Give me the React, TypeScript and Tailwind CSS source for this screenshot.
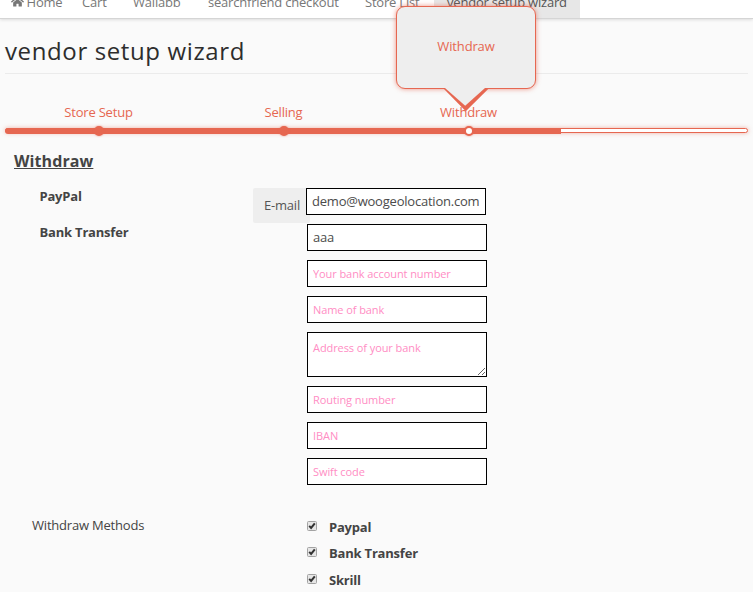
import type { ReactNode } from "react";
import { FaHome } from "react-icons/fa";

const steps = [
  { label: "Store Setup", active: false },
  { label: "Selling", active: false },
  { label: "Withdraw", active: true },
];

const methods = [
  { label: "Paypal", row: "h-[26px]" },
  { label: "Bank Transfer", row: "h-[27px]" },
  { label: "Skrill", row: "h-[27px]" },
];

const field =
  "block w-[180px] rounded-none border border-black bg-white px-[5px] text-[13px] tracking-[-0.22px] text-[#4b4b4b] outline-none placeholder:text-[11px] placeholder:tracking-[-0.08px] placeholder:text-[#ff8dc4] placeholder:opacity-100";

function NavItem({ children, className }: { children: ReactNode; className: string }) {
  return <li className={`flex h-full shrink-0 items-end pb-[7px] pl-[13px] ${className}`}>{children}</li>;
}

function CheckMark() {
  return (
    <svg width="10" height="10" viewBox="0 0 10 10" className="block">
      <rect x="0.5" y="0.5" width="9" height="9" rx="1" fill="#e6e6e6" stroke="#a3a3a3" />
      <path d="M2.2 4.9 4.1 6.9 7.8 2.4" fill="none" stroke="#333" strokeWidth="2" />
    </svg>
  );
}

function Tooltip() {
  return (
    <div className="absolute left-[396px] top-[6px] z-10 flex h-[83px] w-[140px] items-center justify-center rounded-[9px] border border-[#e66751] bg-[#eee] pb-[2px] text-[13px] tracking-[-0.15px] text-[#e66751] shadow-[0_0_5px_rgba(230,103,81,0.7)]">
      Withdraw
      <svg width="48" height="25" viewBox="0 0 48 25" className="absolute left-[45px] top-[80px]">
        <path d="M1 1H47.2L23.8 24.3Z" fill="#e66751" />
        <path d="M3 0H43V1L23.2 18.8L3 1Z" fill="#eee" />
      </svg>
    </div>
  );
}

export default function App() {
  return (
    <div className="relative h-[592px] w-[753px] overflow-hidden bg-[#fafafa] font-['Open_Sans',sans-serif] text-[13px] tracking-[-0.2px] text-[#444]">
      <nav className="h-[19px] overflow-hidden border-b border-[#d5d5d5] bg-white text-[#777] shadow-[0_1px_3px_rgba(0,0,0,0.12)]">
        <ul className="flex h-[18px] items-end whitespace-nowrap leading-[18px]">
          <NavItem className="-ml-[2px] w-[71px]">
            <FaHome className="mb-[3px] mr-[2.5px] size-[13px]" />
            Home
          </NavItem>
          <NavItem className="w-[51px]">Cart</NavItem>
          <NavItem className="w-[75px]">Wallabb</NavItem>
          <NavItem className="w-[157px]">searchfriend checkout</NavItem>
          <NavItem className="w-[82px]">Store List</NavItem>
          <NavItem className="w-[146px] bg-[#e7e7e7] text-[#555]">vendor setup wizard</NavItem>
        </ul>
      </nav>

      <Tooltip />

      <header className="mx-[5px] h-[55px] border-b border-[#ebebeb] pt-[15px]">
        <h1 className="whitespace-nowrap text-[24px] leading-[34px] tracking-[0.62px] text-[#2d2d2d]">vendor setup wizard</h1>
      </header>

      <section className="ml-[5px] mt-[28px] w-[743px]">
        <ol className="grid grid-cols-[repeat(3,185px)] pl-px text-center leading-[20px] text-[#e66751]">
          {steps.map((s) => (
            <li key={s.label} className="h-[26px]">
              {s.label}
            </li>
          ))}
        </ol>
        <div className="relative h-[5px] rounded-[3px] border border-[#e66751] bg-white shadow-[0_0_4px_rgba(230,103,81,0.5)]">
          <div className="absolute -left-px -top-px h-[6px] w-[556px] rounded-l-[3px] bg-[#e66751]" />
          <div className="absolute left-0 -top-[3px] grid grid-cols-[repeat(3,185px)] justify-items-center">
            {steps.map((s) => (
              <span
                key={s.label}
                className={`size-[10px] rounded-full border-2 border-[#e66751] shadow-[0_0_2px_rgba(230,103,81,0.7)] ${s.active ? "bg-white" : "bg-[#e66751]"}`}
              />
            ))}
          </div>
        </div>
      </section>

      <main>
        <h2 className="ml-[14px] mt-[17px] text-[16px] font-bold leading-[22px] tracking-[0.1px] underline">Withdraw</h2>

        <div className="mt-[16px] flex h-[36px]">
          <div className="w-[253px] pl-[39.5px] font-bold leading-[16px]">PayPal</div>
          <div className="h-[35px] w-[53px] rounded-l-[2px] bg-[#eee] pl-[11px] leading-[35px] text-[#555]">E-mail</div>
          <div className="h-[35px] w-[4px] rounded-r-[2px] bg-[#eee]">
            <input className={`${field} h-[27px] pb-[2px]`} defaultValue="demo@woogeolocation.com" />
          </div>
        </div>

        <div className="flex">
          <div className="w-[307px] pl-[39.5px] font-bold leading-[16px]">Bank Transfer</div>
          <div className="flex flex-col gap-[9px]">
            <input className={`${field} h-[27px] pb-[2px]`} defaultValue="aaa" />
            <input className={`${field} h-[27px] pb-[2px]`} placeholder="Your bank account number" />
            <input className={`${field} h-[27px] pb-[2px]`} placeholder="Name of bank" />
            <textarea className={`${field} h-[45px] resize pt-[5px] leading-[20px]`} placeholder="Address of your bank" />
            <input className={`${field} h-[27px] pb-[2px]`} placeholder="Routing number" />
            <input className={`${field} h-[27px] pb-[2px]`} placeholder="IBAN" />
            <input className={`${field} h-[27px] pb-[2px]`} placeholder="Swift code" />
          </div>
        </div>

        <div className="mt-[31px] flex">
          <div className="w-[307px] pl-[32px] leading-[18px]">Withdraw Methods</div>
          <div className="flex flex-col pt-[1px] font-bold">
            {methods.map((m) => (
              <label key={m.label} className={`flex items-start gap-[12px] leading-[20px] ${m.row}`}>
                <span className="mt-[4px]">
                  <CheckMark />
                </span>
                {m.label}
              </label>
            ))}
          </div>
        </div>
      </main>
    </div>
  );
}
